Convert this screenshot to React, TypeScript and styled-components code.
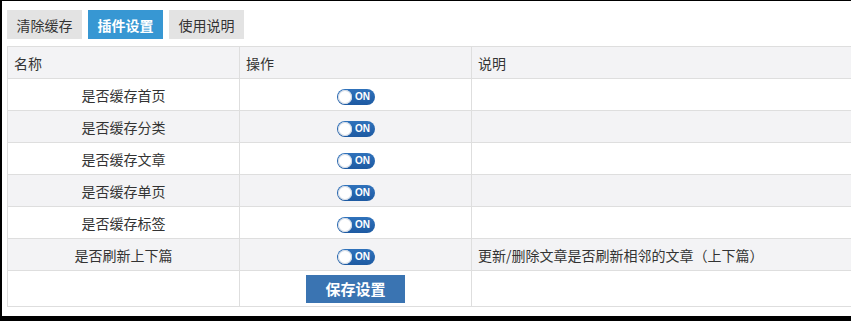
import styled, { createGlobalStyle } from 'styled-components';

const GlobalStyle = createGlobalStyle`
  html, body {
    margin: 0;
    padding: 0;
    background: #000;
  }
  body {
    font-family: 'Noto Sans CJK SC', 'Noto Sans', sans-serif;
    color: #333;
  }
`;

const rows = [
  { name: '是否缓存首页', desc: '' },
  { name: '是否缓存分类', desc: '' },
  { name: '是否缓存文章', desc: '' },
  { name: '是否缓存单页', desc: '' },
  { name: '是否缓存标签', desc: '' },
  { name: '是否刷新上下篇', desc: '更新/删除文章是否刷新相邻的文章（上下篇）' },
];

function App() {
  return (
    <>
      <GlobalStyle />
      <Page>
        <Tabs>
          <Tab>清除缓存</Tab>
          <Tab active>插件设置</Tab>
          <Tab>使用说明</Tab>
        </Tabs>
        <Table>
          <colgroup>
            <Col w={232} />
            <Col w={232} />
            <col />
          </colgroup>
          <thead>
            <tr>
              <Th>名称</Th>
              <Th>操作</Th>
              <Th>说明</Th>
            </tr>
          </thead>
          <tbody>
            {rows.map((row, i) => (
              <Row key={row.name} striped={i % 2 === 1}>
                <CenterCell>{row.name}</CenterCell>
                <CenterCell>
                  <Switch>
                    <Knob />
                    <SwitchLabel>ON</SwitchLabel>
                  </Switch>
                </CenterCell>
                <DescCell>{row.desc}</DescCell>
              </Row>
            ))}
            <Row striped={false} tall>
              <CenterCell />
              <CenterCell>
                <SaveButton>保存设置</SaveButton>
              </CenterCell>
              <DescCell />
            </Row>
          </tbody>
        </Table>
      </Page>
    </>
  );
}

const Page = styled.div`
  margin: 1px 0 0 2px;
  height: 315px;
  background: #fff;
  padding: 9px 0 0 5px;
  box-sizing: border-box;
  overflow: hidden;
`;

const Tabs = styled.div`
  display: flex;
  gap: 6px;
  margin-bottom: 7px;
`;

const Tab = styled.div<{ active?: boolean }>`
  width: 75px;
  height: 29px;
  display: flex;
  align-items: center;
  justify-content: center;
  font-size: 14px;
  background: ${(p) => (p.active ? '#3797d3' : '#e3e3e3')};
  color: ${(p) => (p.active ? '#fff' : '#333')};
  font-weight: ${(p) => (p.active ? 700 : 400)};
`;

const Table = styled.table`
  width: 860px;
  border-collapse: collapse;
  table-layout: fixed;
  font-size: 14px;

  td, th {
    border: 1px solid #dedede;
    height: 31px;
    padding: 0;
  }
`;

const Col = styled.col<{ w: number }>`
  width: ${(p) => p.w}px;
`;

const Th = styled.th`
  background: #f3f3f5;
  font-weight: 400;
  text-align: left;
  padding-left: 6px !important;
`;

const Row = styled.tr<{ striped: boolean; tall?: boolean }>`
  background: ${(p) => (p.striped ? '#f3f3f5' : '#fff')};
  td {
    height: ${(p) => (p.tall ? '35px' : '31px')};
  }
`;

const CenterCell = styled.td`
  text-align: center;
`;

const DescCell = styled.td`
  text-align: left;
  padding-left: 6px !important;
`;

const Switch = styled.span`
  display: inline-flex;
  align-items: center;
  vertical-align: middle;
  width: 38px;
  height: 16px;
  border-radius: 8px;
  background: linear-gradient(#2f72bb, #1d5aa2);
  box-sizing: border-box;
  padding: 0 1px;
`;

const Knob = styled.span`
  width: 14px;
  height: 14px;
  border-radius: 50%;
  background: #fff;
  box-shadow: inset 0 0 0 1px #cfd8e4;
`;

const SwitchLabel = styled.span`
  flex: 1;
  text-align: center;
  color: #fff;
  font-family: 'Liberation Sans', Arial, sans-serif;
  font-weight: 700;
  font-size: 10px;
  line-height: 16px;
`;

const SaveButton = styled.button`
  width: 99px;
  height: 28px;
  border: none;
  background: #3a74b2;
  color: #fff;
  font-family: 'Noto Sans CJK SC', sans-serif;
  font-weight: 700;
  font-size: 15px;
  vertical-align: middle;
  padding: 0;
`;

export default App;
